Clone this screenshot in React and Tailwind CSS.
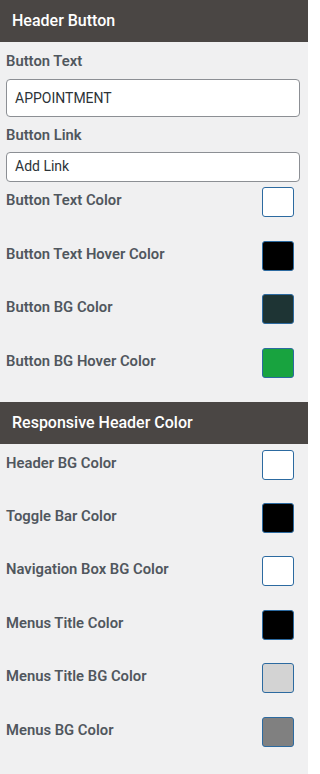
import React from "react";

const font = { fontFamily: "Roboto, 'Noto Sans', sans-serif" };

function Header({ title }) {
  return (
    <div className="flex h-[42px] items-center bg-[#4a4644] px-3 text-[16px] font-medium text-white">
      {title}
    </div>
  );
}

function ColorRow({ label, color, h }) {
  return (
    <div className={`flex items-start justify-between ${h}`}>
      <span className="pt-[3px] text-[14.8px] font-semibold leading-5 text-[#50575e]">{label}</span>
      <div
        className="mr-[14px] h-[30px] w-[32px] rounded-[3px] border border-[#2c6aa0]"
        style={{ backgroundColor: color }}
      />
    </div>
  );
}

export default function App() {
  const rows1 = [
    ["Button Text Color", "#ffffff"],
    ["Button Text Hover Color", "#000000"],
    ["Button BG Color", "#1e3434"],
    ["Button BG Hover Color", "#18a33f"],
  ];
  const rows2 = [
    ["Header BG Color", "#ffffff"],
    ["Toggle Bar Color", "#000000"],
    ["Navigation Box BG Color", "#ffffff"],
    ["Menus Title Color", "#000000"],
    ["Menus Title BG Color", "#d3d3d3"],
    ["Menus BG Color", "#808080"],
  ];
  return (
    <div className="min-h-screen w-[308px] bg-[#f0f0f1]" style={font}>
      <Header title="Header Button" />
      <div className="flex flex-col pl-[6px]">
        <div className="mt-[9px] text-[14.8px] font-semibold leading-5 text-[#50575e]">Button Text</div>
        <div className="mr-[8px] mt-[8px] flex h-[38px] items-center rounded-[4px] border border-[#8c8f94] bg-white px-[8px] text-[14px] text-[#2c3338]">
          APPOINTMENT
        </div>
        <div className="mt-[8px] text-[14.8px] font-semibold leading-5 text-[#50575e]">Button Link</div>
        <div className="mr-[8px] mt-[7px] flex h-[29.5px] items-center rounded-[4px] border border-[#8c8f94] bg-white px-[8px] text-[14px] text-[#2c3338]">
          Add Link
        </div>
        <div className="mt-[5.5px] flex flex-col">
          {rows1.map(([l, c]) => (
            <ColorRow key={l} label={l} color={c} h="h-[53.67px]" />
          ))}
        </div>
      </div>
      <Header title="Responsive Header Color" />
      <div className="flex flex-col pl-[6px] pt-[6px]">
        {rows2.map(([l, c]) => (
          <ColorRow key={l} label={l} color={c} h="h-[53.4px]" />
        ))}
      </div>
    </div>
  );
}
